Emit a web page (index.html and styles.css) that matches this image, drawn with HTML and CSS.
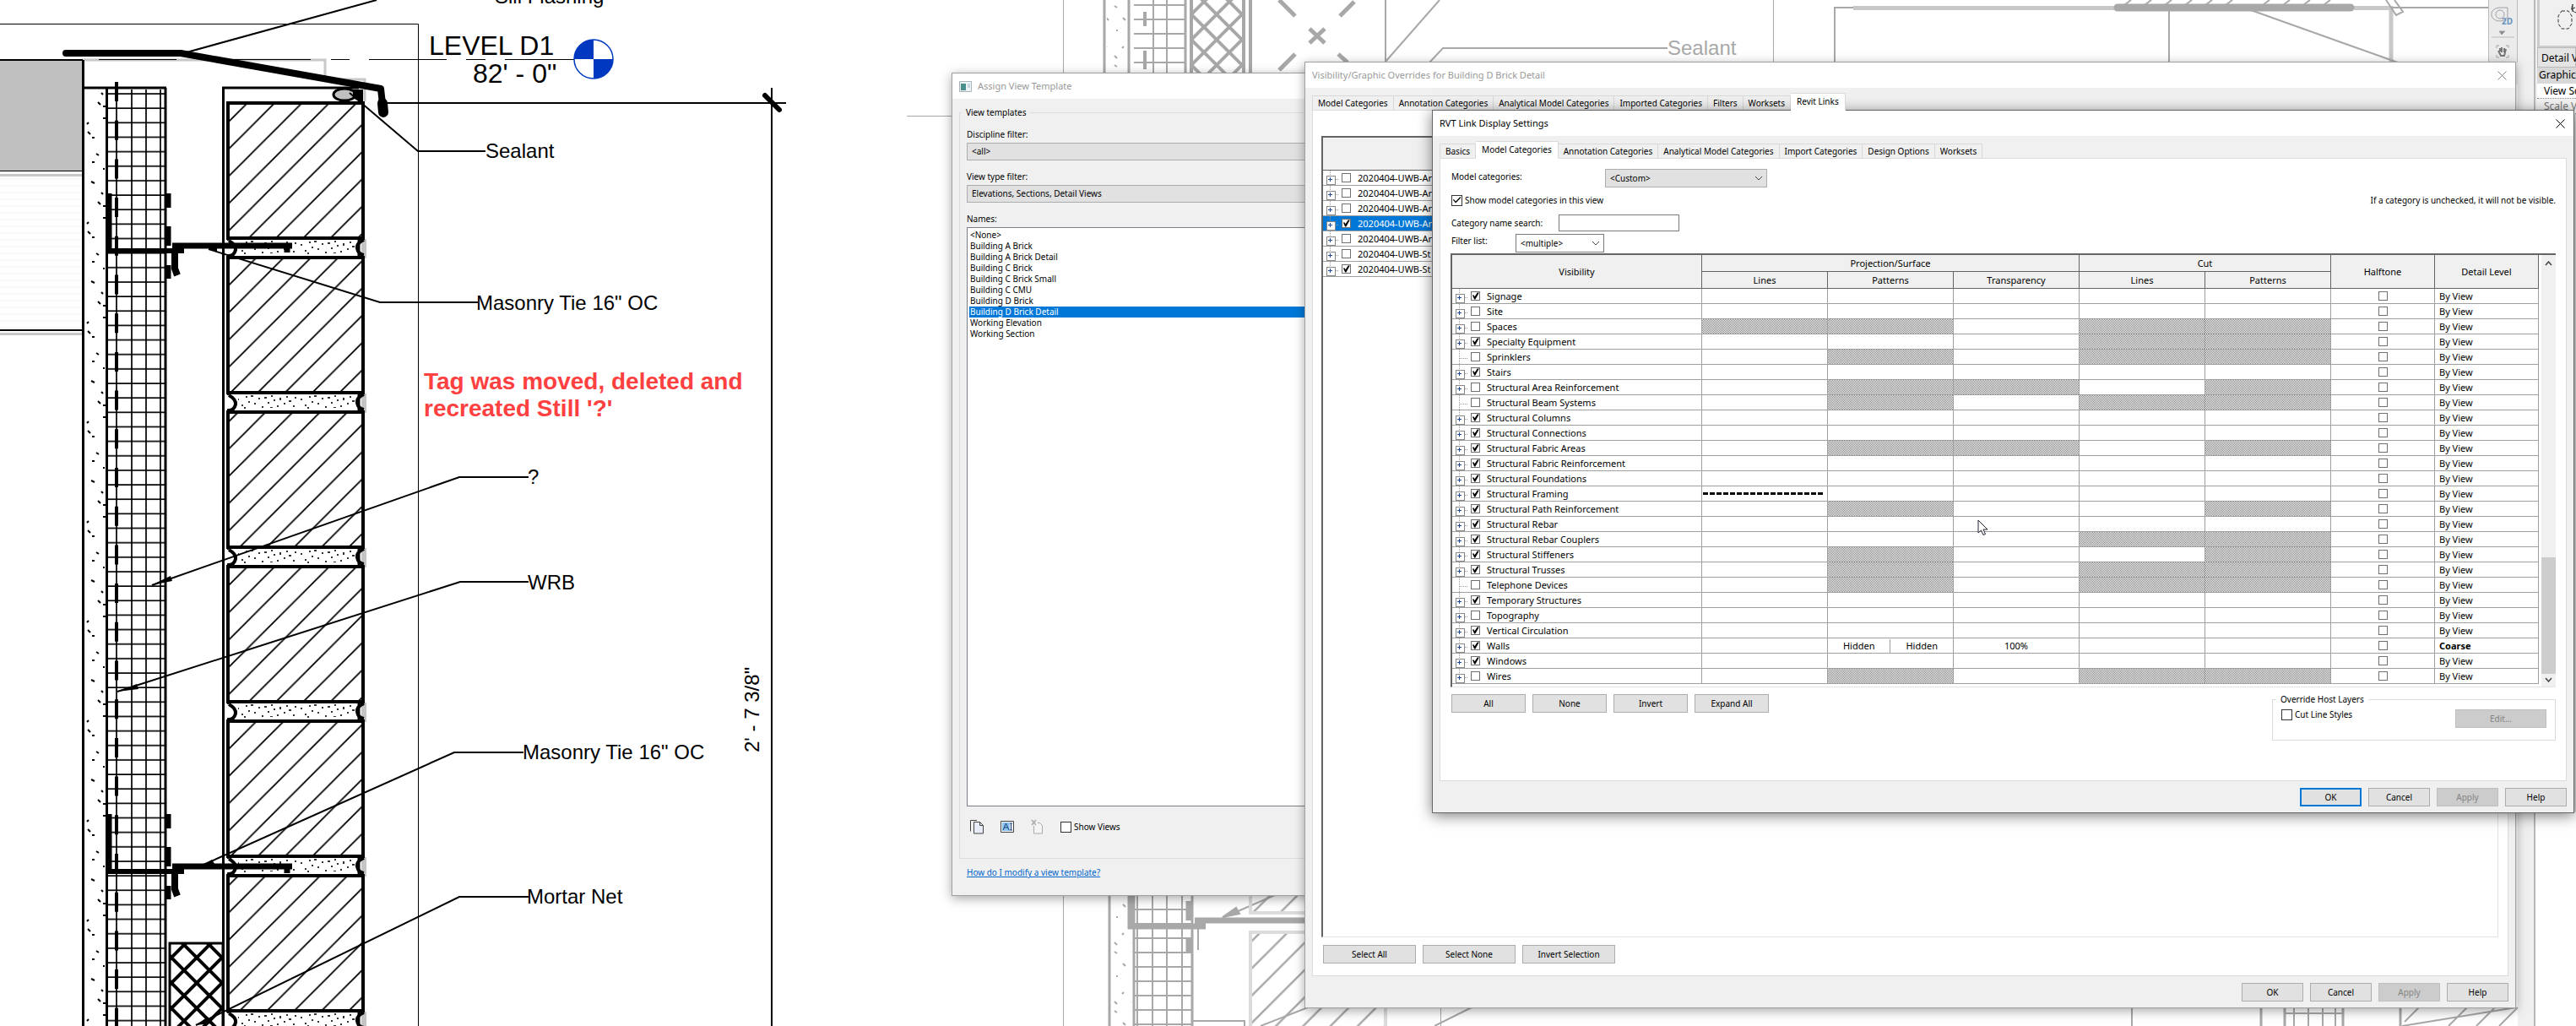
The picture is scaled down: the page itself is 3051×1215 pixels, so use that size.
FILE: index.html
```html
<!DOCTYPE html>
<html lang="en">
<head>
<meta charset="utf-8">
<title>Building D Brick Detail</title>
<link rel="stylesheet" href="styles.css">
</head>
<body>
<main class="desktop">
<svg class="drawing" role="img" aria-label="Brick wall section detail">
  <defs>
    <pattern id="brick" patternUnits="userSpaceOnUse" x="27.4" y="0" width="32.3" height="32.3"><path d="M-2 34.3L34.3 -2M-2 2L2 -2M30.3 34.3L34.3 30.3" stroke="#000" stroke-width="1.8"/></pattern>
    <pattern id="brickGrey" patternUnits="userSpaceOnUse" x="13" y="0" width="32.3" height="32.3"><path d="M-2 34.3L34.3 -2M-2 2L2 -2M30.3 34.3L34.3 30.3" stroke="#a8a8a8" stroke-width="2.5"/></pattern>
    <pattern id="grid" patternUnits="userSpaceOnUse" x="126" y="110" width="70" height="17.15"><path d="M0 1H70M12 0V18M30 0V18M47 0V18M64 0V18" stroke="#000" stroke-width="1.7" fill="none"/></pattern>
    <pattern id="gridGrey" patternUnits="userSpaceOnUse" x="0" y="5" width="70" height="17"><path d="M0 1H70" stroke="#a8a8a8" stroke-width="2"/></pattern>
    <pattern id="net" patternUnits="userSpaceOnUse" x="218" y="1119" width="30" height="30"><path d="M0 0L30 30M30 0L0 30" stroke="#000" stroke-width="4"/></pattern>
    <pattern id="netGrey" patternUnits="userSpaceOnUse" x="1426" y="2" width="30" height="30"><path d="M0 0L30 30M30 0L0 30" stroke="#a8a8a8" stroke-width="4"/></pattern>
    <pattern id="mortar" patternUnits="userSpaceOnUse" x="277" y="99" width="75" height="183"><g fill="#333"><path d="M4 7h2v2h-2zM9 14h2v2h-2zM14 4h2v2h-2zM17 10h2v2h-2zM20 3h3v2h-3zM24 12h2v2h-2zM29 6h2v2h-2zM33 16h2v2h-2zM36 5h3v2h-3zM40 11h2v2h-2zM44 3h2v2h-2zM47 8h2v2h-2zM51 15h2v2h-2zM54 6h2v3h-2zM59 12h2v2h-2zM62 4h2v2h-2zM65 9h3v2h-3zM70 15h2v2h-2zM72 5h2v2h-2zM12 17h2v2h-2zM43 17h3v1h-3z"/></g></pattern>
    <pattern id="gyp" patternUnits="userSpaceOnUse" x="100" y="90" width="26" height="118"><path d="M8 7l4 2M16 31l3 3M22 36h3M3 57l2 -2M4 66l3 3M9 73h3M14 92l3 2M9 102h3M22 50h3M20 20l2 2M22 110h2" stroke="#000" stroke-width="2"/></pattern>
    <pattern id="gypGrey" patternUnits="userSpaceOnUse" x="1316" y="0" width="20" height="70"><path d="M4 7l3 2M14 21l3 3M6 36h2M13 57l2 -2M4 66l3 3" stroke="#a8a8a8" stroke-width="2"/></pattern>
    <pattern id="faint" patternUnits="userSpaceOnUse" width="8" height="8"><path d="M0 4h8" stroke="#f2f2f2"/></pattern>
    <g id="joint">
      <path d="M269 0H271M271 2Q280 7 279 13Q277 21 269 20" fill="none" stroke="#000" stroke-width="4"/>
      <path d="M428 0h6v23h-6z" fill="#c4c4c4"/>
      <path d="M431 1Q422 5 423 11Q424 18 431 19" fill="none" stroke="#000" stroke-width="4"/>
      <path d="M425 0v23" stroke="#000" stroke-width="3"/>
    </g>
    <g id="tie">
      <path d="M129.500 229V300M127 297H218" stroke="#000" stroke-width="6"/>
      <path d="M204 291H346M340 291V299" stroke="#000" stroke-width="7"/>
      <path d="M199.500 229V246M199.500 268V291M199.500 314V330" stroke="#000" stroke-width="6"/>
      <path d="M207 298V318L210 326" stroke="#000" stroke-width="8" fill="none"/>
    </g>
  </defs>

  <!-- floor slab -->
  <rect x="0" y="71" width="98" height="131" fill="#c0c0c0"/>
  <rect x="0" y="208" width="98" height="182" fill="url(#faint)"/>
  <path d="M0 207.500H98M0 395.500H98M98 71H385V90M385 94H432V120" stroke="#c8c8c8" stroke-width="3" fill="none"/>
  <path d="M0 28.500H495.500V1215M0 202.500H98" stroke="#000" fill="none"/>
  <path d="M0 71H98M0 391H98" stroke="#000" stroke-width="2"/>
  <path d="M117 70.500H209M277 70.500H368M392 70.500H414M437 70.500H529M552 70.500H575M598 70.500H680" stroke="#000"/>

  <!-- sheathing and insulation -->
  <rect x="100" y="106" width="25" height="1109" fill="url(#gyp)"/>
  <rect x="127" y="106" width="68" height="1109" fill="url(#grid)"/>
  <path d="M98.500 71V1215M126.500 104V1215M98 104H197M196 104V1215M264.500 1215V104H425" stroke="#000" stroke-width="3" fill="none"/>
  <path d="M138 97V1215" stroke="#000" stroke-width="4" stroke-dasharray="23 22.700"/>

  <!-- mortar joints and bricks -->
  <path d="M282 282H422V305H282zM282 465H422V488H282zM282 648H422V671H282zM282 831H422V854H282zM282 1014H422V1037H282zM282 1197H422V1215H282z" fill="url(#mortar)"/>
  <use href="#joint" y="283"/><use href="#joint" y="466"/><use href="#joint" y="649"/><use href="#joint" y="832"/><use href="#joint" y="1015"/><use href="#joint" y="1198"/>
  <g fill="url(#brick)" stroke="#000" stroke-width="4">
    <rect x="270" y="122" width="160" height="160"/><rect x="270" y="305" width="160" height="160"/><rect x="270" y="488" width="160" height="160"/>
    <rect x="270" y="671" width="160" height="160"/><rect x="270" y="854" width="160" height="160"/><rect x="270" y="1037" width="160" height="160"/>
  </g>
  <rect x="201" y="1117" width="63" height="110" fill="url(#net)" stroke="#000" stroke-width="3"/>
  <use href="#tie"/><use href="#tie" y="735"/>

  <!-- sill flashing and sealant -->
  <path d="M78 63H214L451 105L454 132" fill="none" stroke="#000" stroke-width="8" stroke-linecap="round" stroke-linejoin="round"/>
  <path d="M453 122L454 133" stroke="#000" stroke-width="12" stroke-linecap="round"/>
  <ellipse cx="408" cy="112" rx="13" ry="7" fill="#c0c0c0" stroke="#000" stroke-width="3"/>
  <path d="M418 106H430V122L418 116z"/>

  <!-- dimension line -->
  <path d="M458 122H931M914 104V1215" stroke="#000" stroke-width="2"/>
  <path d="M906 113L923 130" stroke="#000" stroke-width="6" stroke-linecap="round"/>

  <!-- leaders -->
  <g fill="none" stroke="#000" stroke-width="2">
    <path d="M221 62L446 0M414 110L495 179H575M247 295L450 358H566M180 693L544 565H626M139 819L545 689H626M241 1024L538 891H620M232 1214L544 1062H626"/>
  </g>
  <path d="M179 693L202 682L204 688zM139 819L162 810L164 816zM241 1024L251 1018L256 1026zM247 295L257 289L257 298zM232 1214L246 1204L250 1212z"/>
  <circle cx="703" cy="70" r="23" fill="#fff" stroke="#0038c0" stroke-width="1.500"/>
  <path d="M703 70V47A23 23 0 0 0 680 70zM703 70V93A23 23 0 0 0 726 70z" fill="#0038c0"/>

  <g class="note">
    <text x="586" y="4">Sill Flashing</text>
    <text x="575" y="187">Sealant</text>
    <text x="564" y="367">Masonry Tie 16" OC</text>
    <text x="625" y="573">?</text>
    <text x="625" y="698">WRB</text>
    <text x="619" y="899">Masonry Tie 16" OC</text>
    <text x="624" y="1070">Mortar Net</text>
    <text transform="translate(899 891) rotate(-90)">2' - 7 3/8"</text>
  </g>
  <g class="level"><text x="508" y="65">LEVEL D1</text><text x="560" y="98">82' - 0"</text></g>
  <g class="markup"><text x="502" y="461">Tag was moved, deleted and</text><text x="502" y="493">recreated Still '?'</text></g>

  <!-- drawing window in the background -->
  <g fill="none" stroke="#a8a8a8" stroke-width="2">
    <rect x="1343" y="0" width="62" height="90" fill="url(#gridGrey)" stroke="none"/>
    <rect x="1343" y="1060" width="68" height="155" fill="url(#gridGrey)" stroke="none"/>
    <rect x="1311" y="0" width="24" height="90" fill="url(#gypGrey)" stroke="none"/>
    <rect x="1318" y="1060" width="22" height="155" fill="url(#gypGrey)" stroke="none"/>
    <rect x="1411" y="-4" width="62" height="100" fill="url(#netGrey)" stroke-width="4"/>
    <path d="M1074 137.500H1128M1259.500 0V1215M2100.500 0V74M1706.500 1193V1215" stroke-width="1"/>
    <path d="M1308 0V86M1337 0V86M1404 0V86M1314 1060V1215M1343 1060V1215M1412 1060V1215" stroke-width="3"/>
    <path d="M1366 0V86M1382 0V86M1347 1060V1215M1365 1060V1215M1382 1060V1215M1400 1060V1215"/>
    <path d="M1481 0V86M1356 14V31M1356 60V82" stroke-width="4"/>
    <path d="M1515 0L1534 19M1534 64L1515 83M1587 19L1604 2M1551 34L1569 51M1569 34L1551 51M1585 64L1596 74" stroke-width="5"/>
    <path d="M1641 0V74M1705 0L1641 73M1693 74L1709 57H1975"/>
    <path d="M2195 9.500H2508M2788 9.500H2832V74" stroke="#c8c8c8" stroke-width="5"/>
    <path d="M2195 9H2173V74M2569 12V74M2666 12L2840 74M2832 9H2948"/>
    <path d="M2508 9H2784" stroke-width="9" stroke-linecap="round"/>
    <path d="M2516 6l8-6M2540 6l8-6M2564 6l8-6M2588 6l8-6M2612 6l8-6M2636 6l8-6M2680 6l8-6M2704 6l8-6M2728 6l8-6M2752 6l8-6M2836 0L2846 14L2838 18L2826 0"/>
    <path d="M1339 1060V1100M1336 1097H1428M1415 1090H1550M1408 1067V1090M1408 1112V1128" stroke-width="7"/>
    <path d="M1419 1098V1125"/>
    <path d="M1448 1087L1510 1060"/><path d="M1448 1086L1464 1075L1468 1082z" fill="#a8a8a8"/>
    <path d="M1481 1050H1641V1081H1481zM1481 1104H1641V1260H1481z" fill="url(#brickGrey)" stroke="#dcdcdc" stroke-width="4"/>
    <path d="M1549 1193L1493 1215M1743 1193L1699 1215M1412 1209H1474V1220"/>
    <path d="M2525 1193V1215M2717 1193V1215M2734 1193V1215M2751 1193V1215M2766 1193V1215M2706 1200H2775"/>
    <path d="M2678 1193V1215M2706 1193V1215M2775 1193V1215M2843 1193V1215" stroke-width="3"/>
    <path d="M2845 1215L2980 1193M2900 1215L2922 1193M2933 1215L2955 1193M2960 1215L2982 1193M2848 1210L2865 1193"/>
  </g>
  <g class="note note-grey"><text x="1975" y="65">Sealant</text><text x="1975" y="1193">Mortar Net</text></g>

  <!-- view scroll and navigation strip -->
  <rect x="2947" y="0" width="35" height="100" fill="#ebebeb"/>
  <rect x="2982" y="0" width="69" height="1215" fill="#f0f0f0"/>
  <rect x="3003" y="962" width="48" height="253" fill="#fff"/>
  <path d="M2947.500 0V80M2981.500 0V74" stroke="#bbb"/>
  <path d="M3002 0V1215" stroke="#b8b8b8" stroke-width="2"/>
  <g fill="none" stroke="#a0a0a8">
    <path d="M2951 44H2978" stroke="#bbb"/>
    <path d="M2964 9H2970V20A10 8 0 1 1 2960 9z"/><circle cx="2961" cy="17" r="5"/>
    <path d="M2957 57V54H2960M2968 54H2971V57M2957 65V68H2960M2968 68H2971V65"/>
    <path d="M2960 37h7l-4 4z" fill="#888"/><path d="M2959 60l3 6h4l2-8M2961 61v-4M2963 62v-6M2966 62v-5" stroke="#777" stroke-width="2"/>
  </g>
  <text class="nav2d" x="2963" y="29">2D</text>
</svg>

<aside class="properties" aria-label="Properties">
  <div class="type-preview"><svg width="28" height="40" aria-hidden="true"><path d="M7 8h8l4 6v9l-4 6H7l-4 -6v-9z" fill="none" stroke="#333" stroke-dasharray="4 2"/><path d="M18 6l5-2M20 0v9M25 -2a6 6 0 0 0 0 12" fill="none" stroke="#333"/></svg></div>
  <div class="type-name">Detail View</div>
  <div class="prop-group">Graphics</div>
  <div class="prop">View Scale</div>
  <div class="prop prop-off">Scale Value</div>
</aside>

<section class="window template" aria-label="Assign View Template">
  <header class="titlebar"><svg width="15" height="13" aria-hidden="true"><path d="M.5 .5h14v12H.5z" fill="#eef4f6" stroke="#a9b4ba"/><path d="M2 3h6v8H2z" fill="#4b8f8c"/><path d="M10 3h3v5h-3z" fill="#c5d6dd"/></svg>Assign View Template</header>
  <fieldset class="group template-group">
    <legend>View templates</legend>
    <label for="discipline">Discipline filter:</label>
    <select id="discipline" class="combo"><option>&lt;all&gt;</option></select>
    <label for="viewtype">View type filter:</label>
    <select id="viewtype" class="combo"><option>Elevations, Sections, Detail Views</option></select>
    <span class="names-label" id="names">Names:</span>
    <ul class="names" role="listbox" aria-labelledby="names">
      <li role="option">&lt;None&gt;</li><li role="option">Building A Brick</li><li role="option">Building A Brick Detail</li><li role="option">Building C Brick</li><li role="option">Building C Brick Small</li><li role="option">Building C CMU</li><li role="option">Building D Brick</li><li role="option" aria-selected="true" class="selected">Building D Brick Detail</li><li role="option">Working Elevation</li><li role="option">Working Section</li>
    </ul>
    <div class="tools">
      <button class="tool" aria-label="Duplicate"><svg width="18" height="18"><path d="M1.500 14.500V1.500H9" fill="none" stroke="#444"/><path d="M5.500 3.500h7l4 4v9.500h-11z" fill="#e8ecf6" stroke="#444"/><path d="M12.500 3.500v4h4" fill="none" stroke="#444"/></svg></button>
      <button class="tool" aria-label="Rename"><svg width="18" height="18"><path d="M1.500 2.500h15v13h-15z" fill="#f4f8fb" stroke="#444"/><path d="M3 4h9v10H3z" fill="#8cc4ee"/><path d="M4 13L7.500 5L11 13M5 10h5M13.500 5v8M12 5h3M12 13h3" stroke="#1a3f78" fill="none"/></svg></button>
      <button class="tool" aria-label="Delete"><svg width="18" height="18"><path d="M4.500 8v9h10V7.500l-3-3H9" fill="#f4f4f4" stroke="#aaa"/><path d="M2 1l5 6M7 1L2 7" stroke="#aaa" stroke-width="1.500"/></svg></button>
      <label class="check"><input type="checkbox">Show Views</label>
    </div>
  </fieldset>
  <a class="help-link" href="#">How do I modify a view template?</a>
</section>

<section class="window overrides" aria-label="Visibility/Graphic Overrides">
  <header class="titlebar">Visibility/Graphic Overrides for Building D Brick Detail<button class="close" aria-label="Close"><svg width="11" height="11"><path d="M.5 .5l10 10M10.500 .5l-10 10" stroke="#888"/></svg></button></header>
  <nav class="tabs"><button class="tab">Model Categories</button><button class="tab">Annotation Categories</button><button class="tab">Analytical Model Categories</button><button class="tab">Imported Categories</button><button class="tab">Filters</button><button class="tab">Worksets</button><button class="tab active">Revit Links</button></nav>
  <div class="page">
    <div class="tree-frame links-frame">
      <table class="grid links">
        <thead><tr><th aria-label="Links"></th></tr></thead>
        <tbody>
          <tr><td><label class="cat"><i class="plus"></i><input type="checkbox">2020404-UWB-Ar</label></td></tr>
          <tr><td><label class="cat"><i class="plus"></i><input type="checkbox">2020404-UWB-Ar</label></td></tr>
          <tr><td><label class="cat"><i class="plus"></i><input type="checkbox">2020404-UWB-Ar</label></td></tr>
          <tr class="selected"><td><label class="cat"><i class="plus"></i><input type="checkbox" checked>2020404-UWB-Ar</label></td></tr>
          <tr><td><label class="cat"><i class="plus"></i><input type="checkbox">2020404-UWB-Ar</label></td></tr>
          <tr><td><label class="cat"><i class="plus"></i><input type="checkbox">2020404-UWB-St</label></td></tr>
          <tr><td><label class="cat"><i class="plus"></i><input type="checkbox" checked>2020404-UWB-St</label></td></tr>
        </tbody>
      </table>
    </div>
    <div class="buttons wide"><button>Select All</button><button>Select None</button><button>Invert Selection</button></div>
  </div>
  <footer class="buttons actions"><button>OK</button><button>Cancel</button><button disabled>Apply</button><button>Help</button></footer>
</section>

<section class="window settings" aria-label="RVT Link Display Settings">
  <header class="titlebar">RVT Link Display Settings<button class="close" aria-label="Close"><svg width="11" height="11"><path d="M.5 .5l10 10M10.500 .5l-10 10" stroke="#000"/></svg></button></header>
  <nav class="tabs"><button class="tab">Basics</button><button class="tab active">Model Categories</button><button class="tab">Annotation Categories</button><button class="tab">Analytical Model Categories</button><button class="tab">Import Categories</button><button class="tab">Design Options</button><button class="tab">Worksets</button></nav>
  <div class="page">
    <div class="row model-row"><label for="model">Model categories:</label><span class="pick"><select id="model"><option>&lt;Custom&gt;</option></select><svg width="10" height="6" aria-hidden="true"><path d="M1 1l4 4l4-4" fill="none" stroke="#444"/></svg></span></div>
    <div class="row show-row"><label class="check"><input type="checkbox" checked>Show model categories in this view</label><span>If a category is unchecked, it will not be visible.</span></div>
    <div class="row search-row"><label for="search">Category name search:</label><input id="search" type="text"></div>
    <div class="row filter-row"><label for="filter">Filter list:</label><span class="pick"><select id="filter"><option>&lt;multiple&gt;</option></select><svg width="10" height="6" aria-hidden="true"><path d="M1 1l4 4l4-4" fill="none" stroke="#444"/></svg></span></div>
    <div class="tree-frame categories-frame">
      <table class="grid categories">
        <colgroup><col><col class="c-proj"><col class="c-proj"><col class="c-proj"><col class="c-proj"><col class="c-proj"><col class="c-end"><col class="c-end"></colgroup>
        <thead>
          <tr><th rowspan="2">Visibility</th><th colspan="3">Projection/Surface</th><th colspan="2">Cut</th><th rowspan="2">Halftone</th><th rowspan="2">Detail Level</th></tr>
          <tr><th>Lines</th><th>Patterns</th><th>Transparency</th><th>Lines</th><th>Patterns</th></tr>
        </thead>
        <tbody>
<tr><td><label class="cat"><i class="plus"></i><input type="checkbox" checked>Signage</label></td><td></td><td></td><td></td><td></td><td></td><td class="half"><input type="checkbox" aria-label="Halftone"></td><td>By View</td></tr>
<tr><td><label class="cat"><i class="plus"></i><input type="checkbox">Site</label></td><td></td><td></td><td></td><td></td><td></td><td class="half"><input type="checkbox" aria-label="Halftone"></td><td>By View</td></tr>
<tr><td><label class="cat"><i class="plus"></i><input type="checkbox">Spaces</label></td><td class="na"></td><td class="na"></td><td></td><td class="na"></td><td class="na"></td><td class="half"><input type="checkbox" aria-label="Halftone"></td><td>By View</td></tr>
<tr><td><label class="cat"><i class="plus"></i><input type="checkbox" checked>Specialty Equipment</label></td><td></td><td></td><td></td><td class="na"></td><td class="na"></td><td class="half"><input type="checkbox" aria-label="Halftone"></td><td>By View</td></tr>
<tr><td><label class="cat"><i class="leaf"></i><input type="checkbox">Sprinklers</label></td><td></td><td class="na"></td><td></td><td class="na"></td><td class="na"></td><td class="half"><input type="checkbox" aria-label="Halftone"></td><td>By View</td></tr>
<tr><td><label class="cat"><i class="plus"></i><input type="checkbox" checked>Stairs</label></td><td></td><td></td><td></td><td></td><td></td><td class="half"><input type="checkbox" aria-label="Halftone"></td><td>By View</td></tr>
<tr><td><label class="cat"><i class="plus"></i><input type="checkbox">Structural Area Reinforcement</label></td><td></td><td class="na"></td><td class="na"></td><td></td><td class="na"></td><td class="half"><input type="checkbox" aria-label="Halftone"></td><td>By View</td></tr>
<tr><td><label class="cat"><i class="leaf"></i><input type="checkbox">Structural Beam Systems</label></td><td></td><td class="na"></td><td></td><td class="na"></td><td class="na"></td><td class="half"><input type="checkbox" aria-label="Halftone"></td><td>By View</td></tr>
<tr><td><label class="cat"><i class="plus"></i><input type="checkbox" checked>Structural Columns</label></td><td></td><td></td><td></td><td></td><td></td><td class="half"><input type="checkbox" aria-label="Halftone"></td><td>By View</td></tr>
<tr><td><label class="cat"><i class="plus"></i><input type="checkbox" checked>Structural Connections</label></td><td></td><td></td><td></td><td></td><td></td><td class="half"><input type="checkbox" aria-label="Halftone"></td><td>By View</td></tr>
<tr><td><label class="cat"><i class="plus"></i><input type="checkbox" checked>Structural Fabric Areas</label></td><td></td><td class="na"></td><td class="na"></td><td></td><td class="na"></td><td class="half"><input type="checkbox" aria-label="Halftone"></td><td>By View</td></tr>
<tr><td><label class="cat"><i class="plus"></i><input type="checkbox" checked>Structural Fabric Reinforcement</label></td><td></td><td></td><td></td><td></td><td></td><td class="half"><input type="checkbox" aria-label="Halftone"></td><td>By View</td></tr>
<tr><td><label class="cat"><i class="plus"></i><input type="checkbox" checked>Structural Foundations</label></td><td></td><td></td><td></td><td></td><td></td><td class="half"><input type="checkbox" aria-label="Halftone"></td><td>By View</td></tr>
<tr><td><label class="cat"><i class="plus"></i><input type="checkbox" checked>Structural Framing</label></td><td class="dashed"></td><td></td><td></td><td></td><td></td><td class="half"><input type="checkbox" aria-label="Halftone"></td><td>By View</td></tr>
<tr><td><label class="cat"><i class="plus"></i><input type="checkbox" checked>Structural Path Reinforcement</label></td><td></td><td class="na"></td><td></td><td></td><td class="na"></td><td class="half"><input type="checkbox" aria-label="Halftone"></td><td>By View</td></tr>
<tr><td><label class="cat"><i class="plus"></i><input type="checkbox" checked>Structural Rebar</label></td><td></td><td></td><td></td><td></td><td></td><td class="half"><input type="checkbox" aria-label="Halftone"></td><td>By View</td></tr>
<tr><td><label class="cat"><i class="plus"></i><input type="checkbox" checked>Structural Rebar Couplers</label></td><td></td><td></td><td></td><td class="na"></td><td class="na"></td><td class="half"><input type="checkbox" aria-label="Halftone"></td><td>By View</td></tr>
<tr><td><label class="cat"><i class="plus"></i><input type="checkbox" checked>Structural Stiffeners</label></td><td></td><td class="na"></td><td></td><td></td><td class="na"></td><td class="half"><input type="checkbox" aria-label="Halftone"></td><td>By View</td></tr>
<tr><td><label class="cat"><i class="plus"></i><input type="checkbox" checked>Structural Trusses</label></td><td></td><td class="na"></td><td></td><td class="na"></td><td class="na"></td><td class="half"><input type="checkbox" aria-label="Halftone"></td><td>By View</td></tr>
<tr><td><label class="cat"><i class="leaf"></i><input type="checkbox">Telephone Devices</label></td><td></td><td class="na"></td><td></td><td class="na"></td><td class="na"></td><td class="half"><input type="checkbox" aria-label="Halftone"></td><td>By View</td></tr>
<tr><td><label class="cat"><i class="plus"></i><input type="checkbox" checked>Temporary Structures</label></td><td></td><td></td><td></td><td></td><td></td><td class="half"><input type="checkbox" aria-label="Halftone"></td><td>By View</td></tr>
<tr><td><label class="cat"><i class="plus"></i><input type="checkbox">Topography</label></td><td></td><td></td><td></td><td></td><td></td><td class="half"><input type="checkbox" aria-label="Halftone"></td><td>By View</td></tr>
<tr><td><label class="cat"><i class="plus"></i><input type="checkbox" checked>Vertical Circulation</label></td><td></td><td></td><td></td><td></td><td></td><td class="half"><input type="checkbox" aria-label="Halftone"></td><td>By View</td></tr>
<tr><td><label class="cat"><i class="plus"></i><input type="checkbox" checked>Walls</label></td><td></td><td class="split"><div><span>Hidden</span><span>Hidden</span></div></td><td class="mid">100%</td><td></td><td></td><td class="half"><input type="checkbox" aria-label="Halftone"></td><td class="strong">Coarse</td></tr>
<tr><td><label class="cat"><i class="plus"></i><input type="checkbox" checked>Windows</label></td><td></td><td></td><td></td><td></td><td></td><td class="half"><input type="checkbox" aria-label="Halftone"></td><td>By View</td></tr>
<tr><td><label class="cat"><i class="plus"></i><input type="checkbox">Wires</label></td><td></td><td class="na"></td><td></td><td class="na"></td><td class="na"></td><td class="half"><input type="checkbox" aria-label="Halftone"></td><td>By View</td></tr>
        </tbody>
      </table>
      <div class="scroll" aria-hidden="true"><svg width="9" height="6"><path d="M1 5l3.500-4l3.500 4" fill="none" stroke="#444" stroke-width="1.500"/></svg><div class="thumb"></div><svg width="9" height="6"><path d="M1 1l3.500 4l3.500-4" fill="none" stroke="#444" stroke-width="1.500"/></svg></div>
    </div>
    <div class="below">
      <div class="buttons medium"><button>All</button><button>None</button><button>Invert</button><button>Expand All</button></div>
      <fieldset class="group host"><legend>Override Host Layers</legend><label class="check"><input type="checkbox">Cut Line Styles</label><button disabled>Edit...</button></fieldset>
    </div>
  </div>
  <footer class="buttons actions"><button class="default">OK</button><button>Cancel</button><button disabled>Apply</button><button>Help</button></footer>
  <svg class="cursor" width="14" height="20" aria-hidden="true"><path d="M1 1V16L4.500 13L7 18.500L9.500 17.500L7 12H12z" fill="#fff" stroke="#223"/></svg>
</section>
</main>
</body>
</html>
```
FILE: styles.css
```css
* { box-sizing: border-box; }
body { margin: 0; background: #fff; color: #000; font: 10px/13px "Noto Sans", "Open Sans", sans-serif; }
.desktop { position: relative; min-height: 100vh; overflow: hidden; }
.drawing { display: block; width: 100%; height: 100vh; min-height: 1215px; }

.note { font: 24px "Liberation Sans", Arial, sans-serif; }
.note-grey { fill: #a8a8a8; }
.level { font: 32px "Liberation Sans", Arial, sans-serif; }
.markup { font: bold 28px "Liberation Sans", Arial, sans-serif; fill: #ff4040; }
.nav2d { font: bold 10px "Noto Sans", sans-serif; fill: #6a94c0; }

button, select, input, fieldset, legend { margin: 0; padding: 0; border: 0; font: inherit; color: inherit; }
button { background: none; }

/* properties palette at the right edge of the desktop */
.properties { position: absolute; top: 0; right: 0; width: 46px; height: 962px; overflow: hidden; background: #dedede; font-size: 12px; line-height: 18px; white-space: nowrap; }
.type-preview { height: 56px; padding: 5px 0 0 19px; background: #f0f0f0; border: solid #ccc; border-width: 0 0 2px 3px; }
.type-name { height: 24px; padding: 3px 4px; border: 1px solid #bbb; background: #e4e4e4; }
.prop-group { height: 19px; padding: 0 2px; background: #d8d8d8; }
.prop { height: 18px; padding-left: 8px; background: #fff; border-bottom: 1px dotted #888; }
.prop-off { color: #777; background: #f4f4f4; }

.window { position: absolute; display: flex; flex-direction: column; background: #f0f0f0; border: 1px solid #a0a0a0; box-shadow: 0 3px 12px rgba(0, 0, 0, .35); }
.titlebar { display: flex; align-items: center; flex: none; height: 30px; padding: 0 10px 0 8px; background: #fff; color: #999; font-size: 11px; line-height: 16px; }
.close { display: flex; margin-left: auto; }

.template { left: 1127px; top: 86px; width: 500px; height: 975px; }
.template .titlebar { gap: 7px; }
.overrides { left: 1545px; top: 73px; width: 1435px; height: 1121px; }
.settings { left: 1696px; top: 130px; width: 1353px; height: 833px; border-color: #666; box-shadow: 0 3px 16px rgba(0, 0, 0, .5); }
.settings .titlebar { color: #000; }

.group { border: 1px solid #dcdcdc; }
.group legend { padding: 0 5px; margin-left: -6px; }

.template-group { display: flex; flex-direction: column; flex: 1; margin: 10px 8px 0; padding: 11px 8px 0; }
.template-group > label, .names-label { height: 16px; padding-bottom: 3px; margin-top: 2px; }
.combo { appearance: none; height: 21px; padding: 0 5px; margin-bottom: 11px; background: #e1e1e1; border: 1px solid #adadad; border-radius: 0; }
.names { list-style: none; height: 686px; margin: 0; padding: 2px 0 0 2px; background: #fff; border: 1px solid #7a7f87; }
.names li { padding-left: 1px; line-height: 13px; }
.names .selected { background: #0078d7; color: #fff; }
.tools { display: flex; align-items: center; height: 48px; gap: 18px; padding-left: 3px; }
.tool { display: flex; }
.check { display: flex; align-items: center; gap: 3px; }
.help-link { margin: 10px 0 20px 17px; color: #0066cc; align-self: start; }

input[type=checkbox] { appearance: none; flex: none; display: block; width: 11px; height: 11px; background: #fff; border: 1px solid #707070; }
input[type=checkbox]:checked::before { content: ""; display: block; width: 9px; height: 9px; background: #000; clip-path: polygon(10% 38%, 30% 38%, 40% 58%, 75% 5%, 98% 5%, 48% 95%, 35% 95%); }
.check input[type=checkbox] { width: 13px; height: 13px; border-color: #333; }
.check input[type=checkbox]:checked::before { width: 11px; height: 11px; clip-path: polygon(8% 48%, 16% 40%, 38% 64%, 86% 14%, 94% 22%, 38% 82%); }

.tabs { display: flex; flex: none; align-items: flex-end; height: 27px; padding-left: 8px; margin-bottom: -1px; }
.tab { height: 18px; padding: 0 6px; border: 1px solid #d9d9d9; border-left-width: 0; line-height: 17px; }
.tab:first-child { border-left-width: 1px; }
.tab.active { z-index: 1; height: 21px; padding: 0 7px; background: #fff; border-bottom-color: #fff; }
.page { display: flex; flex-direction: column; flex: 1; margin: 0 8px; background: #fff; border: 1px solid #dcdcdc; }

.buttons { display: flex; gap: 8px; }
.buttons button { width: 73px; height: 22px; background: #e1e1e1; border: 1px solid #adadad; }
.buttons.medium button { width: 88px; }
.buttons.wide button { width: 110px; }
.buttons button:disabled, .host button:disabled { color: #838383; background: #ccc; border: 1px solid #bfbfbf; }
.buttons button.default { border: 2px solid #0078d7; }
.actions { justify-content: flex-end; padding: 8px 8px 7px; }

.tree-frame { background: #fff; border: solid #646464; border-width: 2px 0 0 2px; }
.grid { border-collapse: separate; border-spacing: 0; table-layout: fixed; width: 100%; font-size: 11px; line-height: 16px; }
.grid th { height: 20px; padding: 0; background: #f0f0f0; border: solid #646464; border-width: 0 1px 1px 0; font-weight: normal; }
.grid td { height: 18px; padding: 0 0 0 5px; border: solid #a0a0a0; border-width: 0 1px 1px 0; }
.grid td:first-child { padding: 0; }
.grid td.na { background: conic-gradient(#808080 25%, #fff 0 50%, #808080 0 75%, #fff 0) 0 0 / 2px 2px; }
.grid td.mid, .grid td.split { padding: 0; text-align: center; }
.split div { display: flex; }
.split span { flex: 1; }
.split span + span { border-left: 1px solid #a0a0a0; }
.grid td.strong { font-weight: bold; }
.grid td.dashed { background: repeating-linear-gradient(90deg, #000 0 6px, transparent 6px 8px) 1px 7px / 143px 3px no-repeat; }
.half input { margin: 0 auto; }
.grid td.half { padding: 0; }
.cat { display: flex; align-items: center; height: 17px; }
.cat input { margin-right: 8px; }
.plus, .leaf { flex: none; width: 22px; height: 17px; background: repeating-linear-gradient(#999 0 1px, transparent 1px 2px) 8px 0 / 1px 18px no-repeat, repeating-linear-gradient(90deg, #999 0 1px, transparent 1px 2px) 9px 10px / 10px 1px no-repeat; }
.plus::before { content: ""; display: block; width: 9px; height: 9px; margin: 6px 0 0 4px; border: 1px solid #888; background: linear-gradient(#234a9a, #234a9a) 1px 3px / 5px 1px no-repeat, linear-gradient(#234a9a, #234a9a) 3px 1px / 1px 5px no-repeat, #fff; }

.overrides .page { padding: 30px 11px 0 12px; margin-bottom: 0; }
.links-frame { height: 949px; margin-left: -2px; border-right: 1px solid #e3e3e3; border-bottom: 1px solid #e3e3e3; }
.links th { height: 39px; }
.links .selected { background: #0078d7; color: #fff; }
.overrides .wide { padding-top: 9px; }

.settings .page { padding: 12px 12px 0 13px; }
.row { display: flex; align-items: center; }
.model-row { height: 22px; }
.model-row label { width: 182px; height: 16px; }
.show-row { justify-content: space-between; height: 30px; }
.search-row { height: 24px; }
.search-row label { width: 127px; }
.search-row input { width: 143px; height: 20px; background: #fff; border: 1px solid #7a7a7a; }
.filter-row { height: 24px; }
.filter-row label { width: 76px; height: 18px; }
.pick { display: grid; align-items: center; }
.pick select, .pick svg { grid-area: 1 / 1; }
.pick svg { justify-self: end; margin-right: 5px; }
.pick select { appearance: none; width: 105px; height: 22px; padding: 0 5px; border: 1px solid #7a7a7a; border-radius: 0; background: #fff; }
.model-row .pick select { width: 192px; background: #e1e1e1; border-color: #adadad; }
.categories-frame { display: grid; grid-template-columns: 1fr 17px; gap: 3px; align-items: start; height: 514px; margin-left: -1px; border-bottom: 1px solid #e3e3e3; }
.c-proj { width: 149px; }
.c-end { width: 123px; }
.scroll { display: flex; flex-direction: column; align-items: center; justify-content: space-between; align-self: stretch; padding: 7px 0 5px; background: #f0f0f0; }
.thumb { width: 17px; height: 138px; margin: auto 0 4px; background: #cdcdcd; }
.below { display: flex; justify-content: space-between; align-items: flex-start; padding-top: 8px; }
.host { display: flex; justify-content: space-between; align-items: flex-start; width: 336px; height: 55px; padding: 5px 10px 0; }
.host button { width: 108px; height: 22px; }
.cursor { position: absolute; left: 645px; top: 484px; }
```
